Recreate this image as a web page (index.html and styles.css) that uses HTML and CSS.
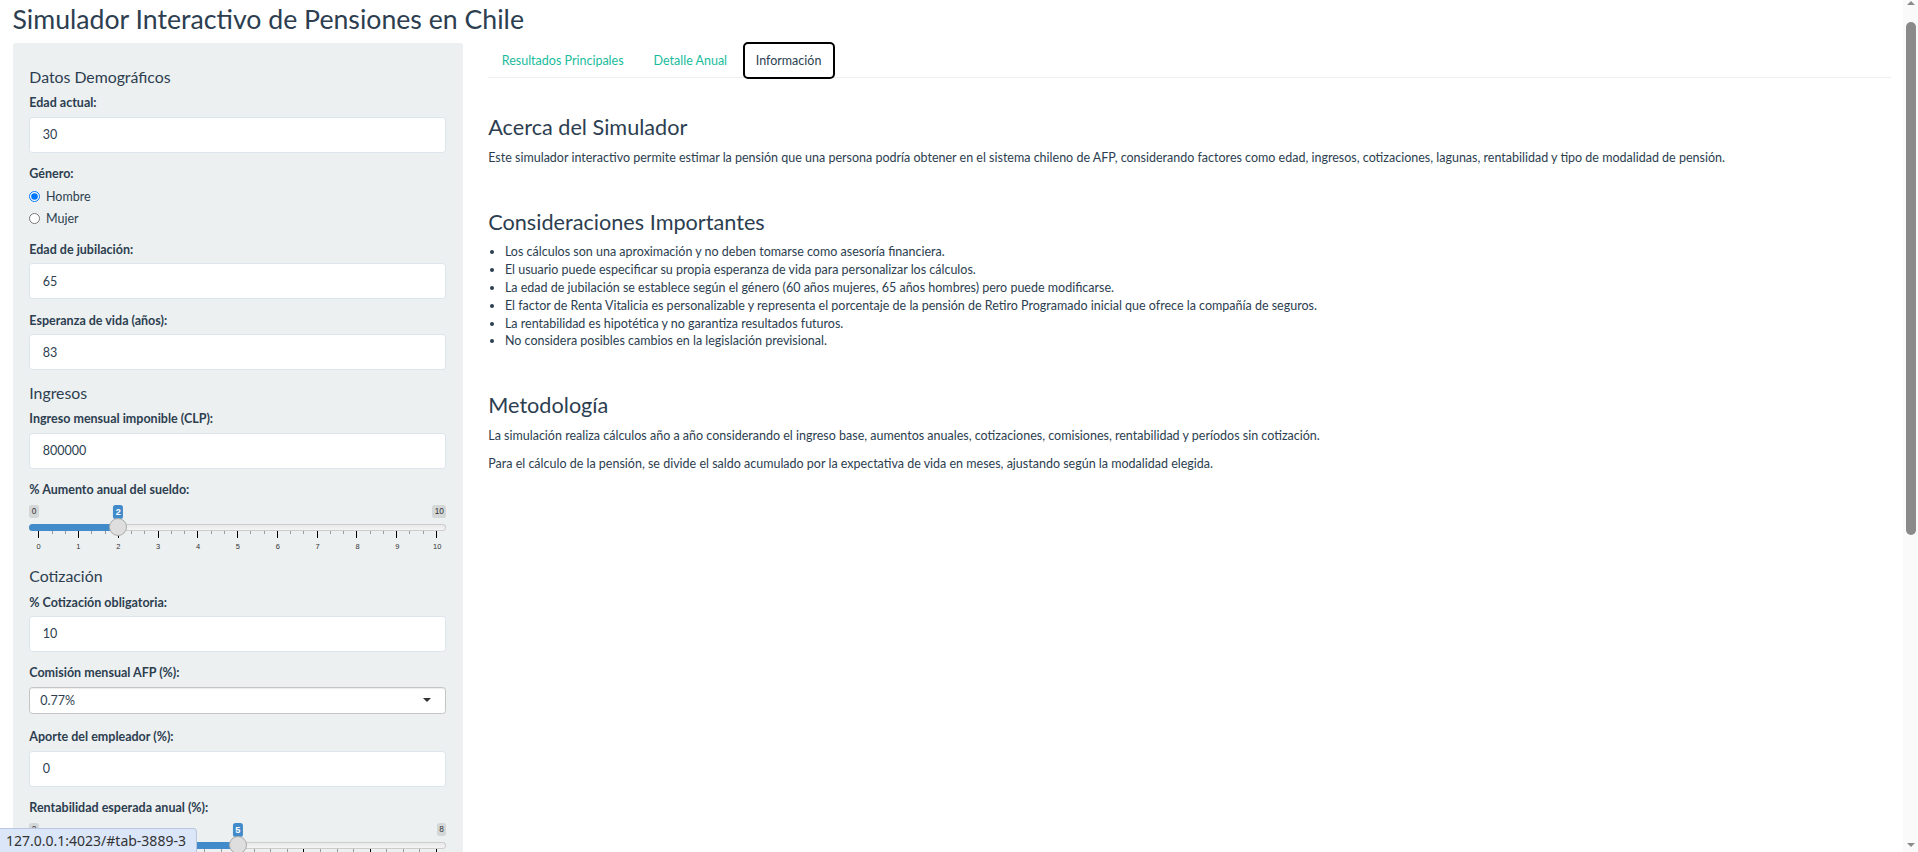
FILE: index.html
```html
<!DOCTYPE html>
<html lang="es">
<head>
<meta charset="utf-8">
<title>Simulador Interactivo de Pensiones en Chile</title>
<link rel="stylesheet" href="styles.css">
</head>
<body>
<div class="container">
  <h2 class="title">Simulador Interactivo de Pensiones en Chile</h2>
  <div class="row">
    <div class="col-side">
      <form class="well">
        <h4 class="first">Datos Demográficos</h4>
        <div class="form-group">
          <label class="control-label" for="edad">Edad actual:</label>
          <input class="form-control" id="edad" type="text" value="30">
        </div>
        <div class="form-group radio-group">
          <label class="control-label">Género:</label>
          <div class="options">
            <label class="radio"><input type="radio" name="genero" checked><span>Hombre</span></label>
            <label class="radio"><input type="radio" name="genero"><span>Mujer</span></label>
          </div>
        </div>
        <div class="form-group">
          <label class="control-label" for="jub">Edad de jubilación:</label>
          <input class="form-control" id="jub" type="text" value="65">
        </div>
        <div class="form-group">
          <label class="control-label" for="vida">Esperanza de vida (años):</label>
          <input class="form-control" id="vida" type="text" value="83">
        </div>

        <h4>Ingresos</h4>
        <div class="form-group">
          <label class="control-label" for="ingreso">Ingreso mensual imponible (CLP):</label>
          <input class="form-control" id="ingreso" type="text" value="800000">
        </div>
        <div class="form-group">
          <label class="control-label">% Aumento anual del sueldo:</label>
          <div class="irs" style="--p:0.2">
            <div class="irs-minmax"><span class="irs-min">0</span><span class="irs-max">10</span></div>
            <div class="irs-line"><div class="irs-bar"></div></div>
            <span class="irs-single">2</span>
            <span class="irs-handle"></span>
            <div class="irs-grid">
              <div class="irs-ticks">
                <i class="big"></i><i></i><i></i><i class="big"></i><i></i><i></i><i class="big"></i><i></i><i></i><i class="big"></i><i></i><i></i><i class="big"></i><i></i><i></i><i class="big"></i><i></i><i></i><i class="big"></i><i></i><i></i><i class="big"></i><i></i><i></i><i class="big"></i><i></i><i></i><i class="big"></i><i></i><i></i><i class="big"></i>
              </div>
              <div class="irs-nums"><span>0</span><span>1</span><span>2</span><span>3</span><span>4</span><span>5</span><span>6</span><span>7</span><span>8</span><span>9</span><span>10</span></div>
            </div>
          </div>
        </div>

        <h4>Cotización</h4>
        <div class="form-group">
          <label class="control-label" for="cot">% Cotización obligatoria:</label>
          <input class="form-control" id="cot" type="text" value="10">
        </div>
        <div class="form-group select-group">
          <label class="control-label">Comisión mensual AFP (%):</label>
          <div class="select-box">0.77%</div>
        </div>
        <div class="form-group">
          <label class="control-label" for="aporte">Aporte del empleador (%):</label>
          <input class="form-control" id="aporte" type="text" value="0">
        </div>
        <div class="form-group">
          <label class="control-label">Rentabilidad esperada anual (%):</label>
          <div class="irs" style="--p:0.5">
            <div class="irs-minmax"><span class="irs-min">2</span><span class="irs-max">8</span></div>
            <div class="irs-line"><div class="irs-bar"></div></div>
            <span class="irs-single">5</span>
            <span class="irs-handle"></span>
            <div class="irs-grid">
              <div class="irs-ticks">
                <i class="big"></i><i></i><i></i><i></i><i class="big"></i><i></i><i></i><i></i><i class="big"></i><i></i><i></i><i></i><i class="big"></i><i></i><i></i><i></i><i class="big"></i><i></i><i></i><i></i><i class="big"></i><i></i><i></i><i></i><i class="big"></i>
              </div>
              <div class="irs-nums"><span>2</span><span>3</span><span>4</span><span>5</span><span>6</span><span>7</span><span>8</span></div>
            </div>
          </div>
        </div>

        <h4>Lagunas Previsionales</h4>
        <div class="form-group">
          <label class="control-label" for="lagunas">Años sin cotizar:</label>
          <input class="form-control" id="lagunas" type="text" value="5">
        </div>

        <h4>Modalidad de Pensión</h4>
        <div class="form-group radio-group">
          <label class="control-label">Tipo de modalidad:</label>
          <div class="options">
            <label class="radio"><input type="radio" name="modalidad" checked><span>Retiro Programado</span></label>
            <label class="radio"><input type="radio" name="modalidad"><span>Renta Vitalicia</span></label>
          </div>
        </div>
        <div class="form-group">
          <label class="control-label" for="densidad">Densidad de cotización (%):</label>
          <input class="form-control" id="densidad" type="text" value="80">
        </div>
        <button type="button" class="btn">Calcular Pensión</button>
      </form>
    </div>

    <div class="col-main">
      <ul class="nav-tabs">
        <li><a href="#tab-3889-1">Resultados Principales</a></li>
        <li><a href="#tab-3889-2">Detalle Anual</a></li>
        <li class="active"><a href="#tab-3889-3">Información</a></li>
      </ul>
      <div class="tab-content">
        <h3>Acerca del Simulador</h3>
        <p>Este simulador interactivo permite estimar la pensión que una persona podría obtener en el sistema chileno de AFP, considerando factores como edad, ingresos, cotizaciones, lagunas, rentabilidad y tipo de modalidad de pensión.</p>

        <h3 class="sec">Consideraciones Importantes</h3>
        <ul class="list">
          <li>Los cálculos son una aproximación y no deben tomarse como asesoría financiera.</li>
          <li>El usuario puede especificar su propia esperanza de vida para personalizar los cálculos.</li>
          <li>La edad de jubilación se establece según el género (60 años mujeres, 65 años hombres) pero puede modificarse.</li>
          <li>El factor de Renta Vitalicia es personalizable y representa el porcentaje de la pensión de Retiro Programado inicial que ofrece la compañía de seguros.</li>
          <li>La rentabilidad es hipotética y no garantiza resultados futuros.</li>
          <li>No considera posibles cambios en la legislación previsional.</li>
        </ul>

        <h3 class="sec">Metodología</h3>
        <p>La simulación realiza cálculos año a año considerando el ingreso base, aumentos anuales, cotizaciones, comisiones, rentabilidad y períodos sin cotización.</p>
        <p class="p2">Para el cálculo de la pensión, se divide el saldo acumulado por la expectativa de vida en meses, ajustando según la modalidad elegida.</p>
      </div>
    </div>
  </div>
</div>
<div class="scrollbar" aria-hidden="true">
  <span class="sb-up"></span>
  <span class="sb-thumb"></span>
  <span class="sb-down"></span>
</div>
<div class="status-bubble">127.0.0.1:4023/#tab-3889-3</div>
</body>
</html>
```

FILE: styles.css
```css
* {
  box-sizing: border-box;
}

body {
  margin: 0;
  font-family: Lato, "Helvetica Neue", Helvetica, Arial, sans-serif;
  font-size: 12.5px;
  line-height: 1.428571;
  color: #2c3e50;
  background: #fff;
}

.container {
  margin-right: 15px;
  padding: 0 12.5px;
}

.title {
  margin: 4.5px 0 8.75px;
  font-size: 26.67px;
  font-weight: 400;
  line-height: 1.1;
}

.row {
  display: flex;
  margin: 0 -12.5px;
}

.col-side {
  flex: 0 0 25%;
  padding: 0 12.5px;
}

.col-main {
  flex: 0 0 75%;
  padding: 0 12.5px;
}

/* ---------- sidebar well ---------- */
.well {
  margin: 0 0 16.67px;
  padding: 16.8px;
  background: #ecf0f1;
  border-radius: 3.33px;
}

.well h4 {
  margin: 14px 0 8.75px;
  font-size: 15.83px;
  font-weight: 400;
  line-height: 1.1;
}

.well h4.first {
  margin-top: 8.75px;
}

.form-group {
  margin-bottom: 12.5px;
}

.control-label {
  display: block;
  margin-bottom: 4.5px;
  font-weight: 700;
}

.form-control {
  display: block;
  width: 100%;
  height: 36px;
  padding: 8.33px 12.5px;
  font-family: inherit;
  font-size: 12.5px;
  line-height: 1.428571;
  color: #2c3e50;
  background: #fff;
  border: 1px solid #dce4ec;
  border-radius: 3.33px;
  outline: none;
}

.radio-group {
  margin-bottom: 13.5px;
}

.radio-group .control-label {
  margin-bottom: 4.6px;
}

.options {
  display: flex;
  flex-direction: column;
  gap: 4.17px;
}

.radio {
  display: flex;
  align-items: flex-start;
  min-height: 17.86px;
  font-weight: 400;
}

.radio input {
  width: 11px;
  height: 11px;
  margin: 3.6px 5.7px 0 0;
  flex: 0 0 auto;
}

.select-group {
  margin-bottom: 14px;
}

.select-box {
  position: relative;
  display: flex;
  align-items: center;
  height: 27.5px;
  margin-top: 2px;
  padding: 0 10px;
  background: #fff;
  border: 1px solid #c4c4c4;
  border-radius: 3.33px;
  box-shadow: inset 0 1px 1px rgba(0, 0, 0, 0.075);
}

.select-box::after {
  content: "";
  position: absolute;
  right: 14.2px;
  top: 50%;
  margin-top: -2.5px;
  border-style: solid;
  border-width: 4.17px 4.17px 0 4.17px;
  border-color: #333 transparent transparent transparent;
}

/* ---------- range slider ---------- */
.irs {
  position: relative;
  height: 50px;
  font-family: "Liberation Sans", Arial, sans-serif;
}

.irs-minmax {
  display: flex;
  justify-content: space-between;
  align-items: flex-start;
  height: 20.8px;
  padding-top: 1.5px;
}

.irs-min,
.irs-max {
  padding: 0.83px 2.5px;
  font-size: 8.33px;
  line-height: 1.333;
  color: #333;
  background: rgba(0, 0, 0, 0.1);
  border-radius: 2.5px;
}

.irs-line {
  height: 6.67px;
  border-radius: 6.67px;
  background: linear-gradient(to bottom, #dedede -50%, #fff 150%);
  box-shadow: inset 0 0 0 1px #cccccc;
  overflow: hidden;
}

.irs-bar {
  height: 100%;
  width: calc(9.17px + var(--p) * (100% - 18.33px));
  background: #428bca;
}

.irs-single {
  position: absolute;
  top: 1.5px;
  left: calc(9.17px + var(--p) * (100% - 18.33px));
  transform: translateX(-50%);
  padding: 0.83px 2.5px;
  font-size: 9.17px;
  font-weight: 700;
  line-height: 1.333;
  color: #fff;
  background: #428bca;
  border-radius: 2.5px;
}

.irs-handle {
  position: absolute;
  top: 14.2px;
  left: calc(var(--p) * (100% - 18.33px));
  width: 18.33px;
  height: 18.33px;
  background: #dedede;
  border: 1px solid #ababab;
  border-radius: 50%;
}

.irs-grid {
  margin: 0 9.17px;
  height: 22.5px;
}

.irs-ticks {
  display: flex;
  justify-content: space-between;
  align-items: flex-start;
  height: 6.67px;
}

.irs-ticks i {
  display: block;
  width: 1px;
  height: 3.33px;
  background: #999;
}

.irs-ticks i.big {
  height: 6.67px;
  background: #000;
}

.irs-nums {
  display: flex;
  justify-content: space-between;
  margin-top: 5px;
  font-size: 7.5px;
  line-height: 7.5px;
  color: #333;
}

.irs-nums span {
  display: flex;
  justify-content: center;
  width: 0;
  white-space: nowrap;
}

.btn {
  display: block;
  height: 36px;
  padding: 0 12.5px;
  font-family: inherit;
  font-size: 12.5px;
  color: #fff;
  background: #2c3e50;
  border: none;
  border-radius: 3.33px;
}

/* ---------- main panel ---------- */
.nav-tabs {
  display: flex;
  margin: 0;
  padding: 0;
  list-style: none;
  border-bottom: 1px solid #ecf0f1;
}

.nav-tabs li {
  margin-bottom: -1px;
}

.nav-tabs a {
  display: block;
  margin-right: 3px;
  padding: 8px 12.5px 7.6px;
  line-height: 17.86px;
  color: #18bc9c;
  text-decoration: none;
  border: 1px solid transparent;
  border-radius: 3.33px 3.33px 0 0;
}

.nav-tabs li.active a {
  padding-left: 11.2px;
  padding-right: 11.2px;
  color: #2c3e50;
  background: #fff;
  border-color: #ecf0f1 #ecf0f1 transparent;
  outline: 2px solid #000;
  outline-offset: -1px;
  border-radius: 4px;
}

.tab-content {
  padding-top: 20.5px;
}

.tab-content h3 {
  margin: 17.5px 0 8.75px;
  font-size: 21.67px;
  font-weight: 400;
  line-height: 1.1;
}

.tab-content h3.sec {
  margin-top: 44.1px;
}

.tab-content p {
  margin: 0 0 8.75px;
}

.tab-content p.p2 {
  margin-top: 10px;
}

.list {
  margin: 0 0 8.75px;
  padding-left: 16.67px;
}

/* ---------- browser window chrome (overlays) ---------- */
.scrollbar {
  position: fixed;
  top: 0;
  right: 0;
  bottom: 0;
  width: 15px;
  display: flex;
  flex-direction: column;
  align-items: center;
  background: #fafafa;
}

.sb-up {
  margin-top: 1px;
  border-style: solid;
  border-width: 0 4.5px 4px 4.5px;
  border-color: transparent transparent #8a8a8a transparent;
}

.sb-thumb {
  width: 10px;
  height: 513px;
  margin-top: 17px;
  background: #8a8a8a;
  border-radius: 5px;
}

.sb-down {
  margin-top: auto;
  margin-bottom: 5px;
  border-style: solid;
  border-width: 4px 4.5px 0 4.5px;
  border-color: #8a8a8a transparent transparent transparent;
}

.status-bubble {
  position: fixed;
  left: 0;
  bottom: 0;
  height: 24px;
  padding: 0 10px 0 6px;
  display: flex;
  align-items: center;
  font-family: "Noto Sans", "DejaVu Sans", sans-serif;
  font-size: 14px;
  color: #333;
  background: #dbe6f8;
  border-top: 1px solid #b8c6df;
  border-right: 1px solid #b8c6df;
  border-top-right-radius: 4px;
}
```
